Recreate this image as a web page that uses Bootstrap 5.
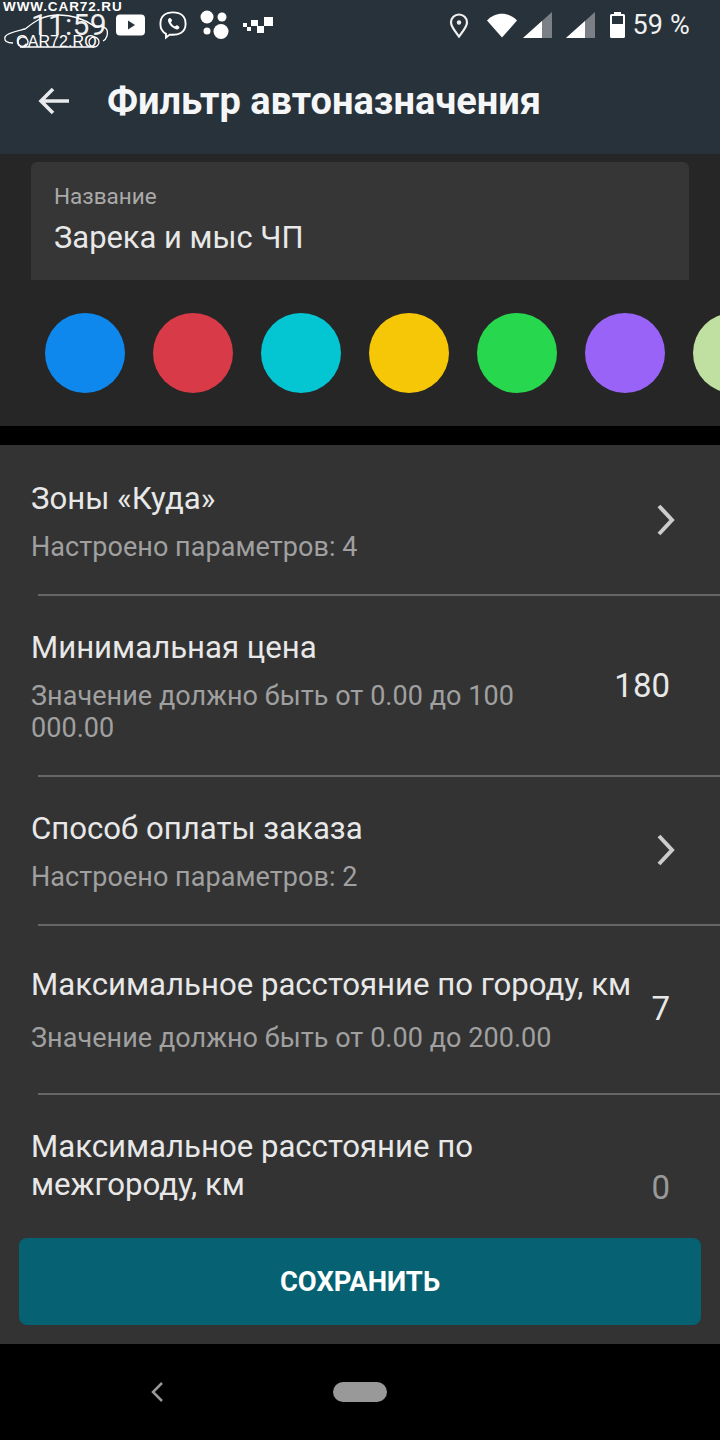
<!DOCTYPE html>
<html lang="ru">
<head>
    <meta charset="UTF-8">
    <meta name="viewport" content="width=device-width, initial-scale=1.0">
    <title>Фильтр автоназначения</title>
    <link href="https://cdn.jsdelivr.net/npm/bootstrap@5.3.0/dist/css/bootstrap.min.css" rel="stylesheet">
    <style>
        html, body { height: 1440px; overflow: hidden; background: #000; }
        body { font-family: Roboto, "Liberation Sans", sans-serif; color: #eee; }
        .app-shell { width: 720px; height: 1440px; position: relative; overflow: hidden; }
        .top-head { height: 154px; background: #28323a; }
        .status-row { height: 48px; padding: 2px 30px 0 31px; }
        .status-time { font-size: 30px; color: #f0f0f0; width: 85px; line-height: 1; letter-spacing: .2px; }
        .status-pct { font-size: 27px; color: #f0f0f0; letter-spacing: .2px; line-height: 1; margin-left: 7px; }
        .ic-viber { margin-left: 13px; }
        .ic-dots { margin-left: 13px; }
        .ic-taxi { margin-left: 13px; }
        .ic-wifi { margin-left: 18px; }
        .ic-sig-a { margin-left: 6px; }
        .ic-sig-b { margin-left: 14px; }
        .ic-batt { margin-left: 15px; }
        .tool-row { height: 106px; padding: 0 0 0 38px; }
        .head-title { font-size: 38px; font-weight: 700; color: #f5f6f7; margin: 0 0 0 37px; line-height: 1; }
        .name-zone { height: 272px; background: #262626; padding: 8px 31px 0; overflow: hidden; }
        .name-box { height: 118px; background: #363636; border-radius: 6px 6px 0 0; padding: 21px 23px 0; }
        .name-label { font-size: 22.5px; color: #aaa; line-height: 26px; }
        .name-value { font-size: 30.9px; color: #e8e8e8; line-height: 36px; margin-top: 11px; }
        .swatches { margin: 33px -31px 0 14px; gap: 28px; }
        .swatch { width: 80px; height: 80px; border-radius: 50%; flex: none; }
        .sw-blue { background: #0f88ee; }
        .sw-red { background: #d93a47; }
        .sw-cyan { background: #04c6d3; }
        .sw-yellow { background: #f5c707; }
        .sw-green { background: #27d84f; }
        .sw-violet { background: #9a63f7; }
        .sw-pale { background: #bfe0a0; }
        .gap-band { height: 19px; background: #000; }
        .filter-list { height: 899px; background: #333; position: relative; overflow: hidden; }
        .filter-row { padding-left: 31px; position: relative; }
        .filter-row::after { content: ""; position: absolute; left: 38px; right: 0; bottom: 0; height: 2px; background: #666; }
        .row-last::after { display: none; }
        .row-title { font-size: 31.15px; color: #e8e8e8; line-height: 38px; }
        .row-sub { font-size: 27px; color: #a0a0a0; line-height: 32px; letter-spacing: .05px; margin-top: 13px; }
        .row-num { font-size: 33px; color: #e8e8e8; line-height: 1; text-align: right; padding-right: 50px; }
        .row-chev { margin-right: 44px; }
        .row-text { width: 500px; }
        .row-a { height: 151px; padding-top: 35px; }
        .row-a .row-chev { margin-top: 24px; }
        .row-b { height: 181px; padding-top: 33px; }
        .row-b .row-num { width: 189px; padding-top: 40px; }
        .row-c { height: 149px; padding-top: 33px; }
        .row-c .row-chev { margin-top: 24px; }
        .row-d { height: 169px; padding-top: 40px; }
        .row-d .row-sub { margin-top: 18px; }
        .row-d .row-num { padding-top: 26px; }
        .row-e { height: 150px; padding-top: 33px; }
        .row-e .row-num { padding-top: 43px; color: #999; }
        .save-bar { position: absolute; left: 0; right: 0; bottom: 0; height: 106px; background: #333; padding: 0 19px 19px; }
        .save-btn { display: block; width: 100%; height: 87px; background: #066272; border: 0; border-radius: 8px; color: #fff; font-size: 27.4px; font-weight: 700; line-height: 1; padding-top: 4px; }
        .nav-strip { height: 96px; background: #000; }
        .home-pill { width: 54px; height: 20px; border-radius: 10px; background: #999; }
        .nav-back { margin-left: 150px; margin-right: 169px; }
        .mark-top { position: absolute; left: 3px; top: 0; font: 700 13.500px/13px "Liberation Sans", sans-serif; letter-spacing: .9px; color: #fff; white-space: nowrap; }
        .mark-bot { position: absolute; left: 16px; top: 33px; font: 400 16px/17px "Liberation Sans", sans-serif; letter-spacing: .1px; color: #fff; white-space: nowrap; }
        .mark-car { position: absolute; left: 4px; top: 13px; }
    </style>
</head>
<body>
<div class="app-shell d-flex flex-column">
    <div class="top-head">
        <div class="status-row d-flex align-items-center">
            <div class="status-time">11:59</div>
            <svg width="30" height="22" viewBox="0 0 30 22"><rect width="29" height="21" y="0.5" rx="4" fill="#fff"/><path d="M12 6.500v9l7-4.500z" fill="#28323a"/></svg>
            <svg class="ic-viber" width="28" height="30" viewBox="0 0 30 30" fill="none" stroke="#fff" stroke-width="2"><path d="M15 1.500C7 1.500 1.500 5.500 1.500 14c0 5 2 8.500 6 10.500v4l4-3.200c9 1 17-2 17-11.300C28.500 5.500 23 1.500 15 1.500z"/><path d="M10.500 8c1.800-1.500 2.800.5 3.500 2 .4 1-1.500 1.400-1 2.500.8 1.800 2 3 3.800 3.800 1 .4 1.500-1.500 2.500-1 1.500.7 3.500 1.700 2 3.500-1.500 1.700-4 .8-6.500-1-2.300-1.600-4-3.800-4.800-6-.6-1.700-.6-2.900.5-3.800z" fill="#fff" stroke="none"/></svg>
            <svg class="ic-dots" width="30" height="30" viewBox="0 0 30 30" fill="#fff"><circle cx="7" cy="7" r="6.500"/><circle cx="22" cy="7" r="4.500"/><circle cx="7" cy="21" r="3.500"/><circle cx="21" cy="21.500" r="7.500"/></svg>
            <svg class="ic-taxi" width="30" height="16" viewBox="0 0 30 16" fill="#fff"><rect x="0" y="6" width="4" height="4"/><rect x="8" y="3" width="7" height="6"/><rect x="14" y="9" width="7" height="7"/><rect x="21" y="0" width="9" height="9"/><rect x="4" y="10" width="4" height="4"/></svg>
            <div class="ms-auto d-flex align-items-center">
                <svg width="20" height="25" viewBox="0 0 20 25" fill="none" stroke="#f0f0f0" stroke-width="2.200"><path d="M10 23.500C5 17 2 13.500 2 9.500a8 8 0 0 1 16 0c0 4-3 7.500-8 14z"/><circle cx="10" cy="9.500" r="2.200" fill="#f0f0f0" stroke="none"/></svg>
                <svg class="ic-wifi" width="30" height="25" viewBox="0 0 30 25"><path d="M0 7.500C8-1.500 22-1.500 30 7.500L15 24.500z" fill="#fff"/></svg>
                <svg class="ic-sig-a" width="29" height="26" viewBox="0 0 29 26"><path d="M0 26L29 0v26z" fill="#7a8085"/><path d="M0 26L19 9v17z" fill="#fff"/></svg>
                <svg class="ic-sig-b" width="29" height="26" viewBox="0 0 29 26"><path d="M0 26L29 0v26z" fill="#7a8085"/><path d="M0 26L19 9v17z" fill="#fff"/></svg>
                <svg class="ic-batt" width="15" height="26" viewBox="0 0 15 26"><path d="M4 2V0h7v2h2.500q1.500 0 1.500 1.500v21q0 1.500-1.500 1.500h-12Q0 26 0 24.500v-21Q0 2 1.500 2z" fill="#fff"/><rect x="2" y="4" width="11" height="8" fill="#28323a"/></svg>
                <span class="status-pct">59 %</span>
            </div>
        </div>
        <div class="tool-row d-flex align-items-center">
            <svg width="32" height="30" viewBox="0 0 32 30" fill="none" stroke="#e8eaec" stroke-width="3.600"><path d="M31 15H3M15 3L3 15l12 12"/></svg>
            <h1 class="head-title">Фильтр автоназначения</h1>
        </div>
    </div>

    <div class="name-zone">
        <div class="name-box">
            <div class="name-label">Название</div>
            <div class="name-value">Зарека и мыс ЧП</div>
        </div>
        <div class="swatches d-flex">
            <div class="swatch sw-blue"></div>
            <div class="swatch sw-red"></div>
            <div class="swatch sw-cyan"></div>
            <div class="swatch sw-yellow"></div>
            <div class="swatch sw-green"></div>
            <div class="swatch sw-violet"></div>
            <div class="swatch sw-pale"></div>
        </div>
    </div>
    <div class="gap-band"></div>

    <div class="filter-list">
        <div class="filter-row row-a d-flex">
            <div class="flex-grow-1">
                <div class="row-title">Зоны «Куда»</div>
                <div class="row-sub">Настроено параметров: 4</div>
            </div>
            <svg class="row-chev" width="20" height="32" viewBox="0 0 20 32" fill="none" stroke="#ccc" stroke-width="4"><path d="M3 2l13 14L3 30"/></svg>
        </div>
        <div class="filter-row row-b d-flex">
            <div class="row-text">
                <div class="row-title">Минимальная цена</div>
                <div class="row-sub">Значение должно быть от 0.00 до 100 000.00</div>
            </div>
            <div class="row-num">180</div>
        </div>
        <div class="filter-row row-c d-flex">
            <div class="flex-grow-1">
                <div class="row-title">Способ оплаты заказа</div>
                <div class="row-sub">Настроено параметров: 2</div>
            </div>
            <svg class="row-chev" width="20" height="32" viewBox="0 0 20 32" fill="none" stroke="#ccc" stroke-width="4"><path d="M3 2l13 14L3 30"/></svg>
        </div>
        <div class="filter-row row-d d-flex">
            <div class="flex-grow-1">
                <div class="row-title">Максимальное расстояние по городу, км</div>
                <div class="row-sub">Значение должно быть от 0.00 до 200.00</div>
            </div>
            <div class="row-num">7</div>
        </div>
        <div class="filter-row row-e row-last d-flex">
            <div class="row-text">
                <div class="row-title">Максимальное расстояние по межгороду, км</div>
            </div>
            <div class="row-num flex-grow-1">0</div>
        </div>
        <div class="save-bar">
            <button class="save-btn" type="button">СОХРАНИТЬ</button>
        </div>
    </div>

    <div class="nav-strip d-flex align-items-center">
        <svg class="nav-back" width="14" height="22" viewBox="0 0 14 22" fill="none" stroke="#999" stroke-width="2.500"><path d="M12 2L3 11l9 9"/></svg>
        <div class="home-pill"></div>
    </div>

    <div class="mark-top">WWW.CAR72.RU</div>
    <svg class="mark-car" width="106" height="36" viewBox="0 0 106 36" fill="none" stroke="#fff" stroke-width="1.300"><path d="M9 30C3 30 0 28 1 24c1-4 12-6 20-8C30 9 38 2 55 2c12 0 25 4 35 11 5 0 12 1 13 4 1 4 0 9-4 11M16 34H90"/><circle cx="19" cy="29" r="5"/><circle cx="90" cy="29" r="5"/></svg>
    <div class="mark-bot">CAR72.RO</div>
</div>
</body>
</html>
